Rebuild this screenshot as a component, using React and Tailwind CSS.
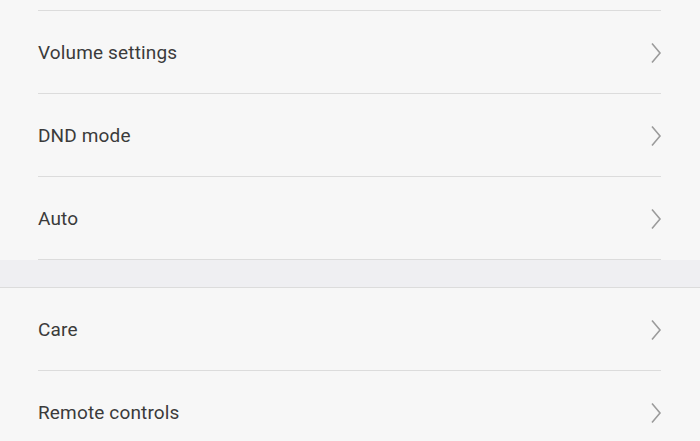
import { ChevronRight } from 'lucide-react'

const GROUPS = [
  ['Volume settings', 'DND mode', 'Auto'],
  ['Care', 'Remote controls'],
]

function Row({ label, last }) {
  return (
    <div className={`ml-[38px] mr-[39px] h-[83px] flex items-center justify-between ${last ? '' : 'border-b border-[#dcdcdc]'}`}>
      <span className="pt-[2px] text-[19px] text-[#3b3b3b] tracking-[0.15px]">{label}</span>
      <svg width="12" height="22" viewBox="0 0 12 22" className="mr-[-1px] mt-[1px]">
        <path d="M2 1.5 L10 11 L2 20.5" fill="none" stroke="#9b9b9b" strokeWidth="1.6" />
      </svg>
    </div>
  )
}

export default function App() {
  return (
    <div className="w-[700px] h-[441px] overflow-hidden bg-[#f7f7f7]" style={{ fontFamily: 'Roboto, sans-serif' }}>
      <div className="h-[11px] ml-[38px] mr-[39px] border-b border-[#dcdcdc]" />
      {GROUPS[0].map((l) => (
        <Row key={l} label={l} />
      ))}
      <div className="h-[28px] bg-[#efeff2] border-b border-[#dcdcdc]" />
      {GROUPS[1].map((l, i) => (
        <Row key={l} label={l} last={i === GROUPS[1].length - 1} />
      ))}
    </div>
  )
}
